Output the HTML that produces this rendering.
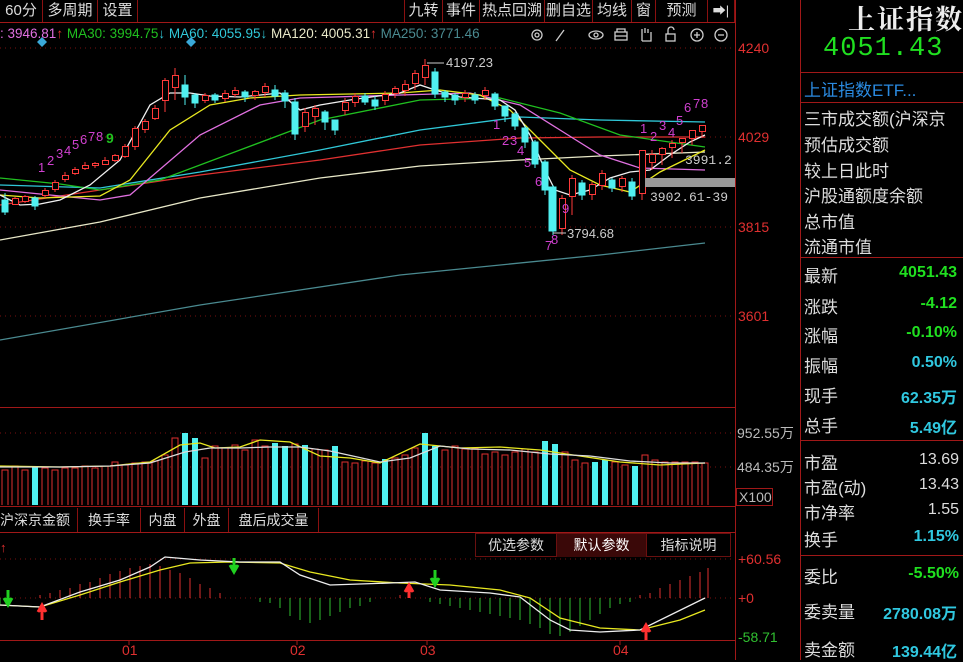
<!DOCTYPE html>
<html><head><meta charset="utf-8"><style>
*{margin:0;padding:0;box-sizing:border-box}
body{width:963px;height:660px;background:#000;overflow:hidden;position:relative;font-family:"Liberation Sans","Noto Sans CJK SC",sans-serif}
.t{position:absolute;white-space:nowrap}
.btn{position:absolute;top:0;height:22px;border-right:1px solid #8a1010;color:#ddd;font-size:15px;line-height:22px;text-align:center}
.rl{position:absolute;left:804px;color:#ddd;font-size:17px;white-space:nowrap}
.rv{position:absolute;right:2px;font-size:16px;font-weight:bold;white-space:nowrap}
</style></head><body>
<svg width="963" height="660" style="position:absolute;left:0;top:0" font-family="Liberation Sans,sans-serif">
<g stroke="#a01818" stroke-width="1" fill="none">
<line x1="0" y1="22.5" x2="735" y2="22.5"/>
<line x1="735.5" y1="0" x2="735.5" y2="660"/>
<line x1="800.5" y1="0" x2="800.5" y2="660"/>
<line x1="0" y1="407.5" x2="735" y2="407.5"/>
<line x1="0" y1="506.5" x2="735" y2="506.5"/>
<line x1="0" y1="532.5" x2="735" y2="532.5"/>
<line x1="0" y1="640.5" x2="735" y2="640.5"/>
<line x1="800" y1="72.5" x2="963" y2="72.5"/>
<line x1="800" y1="102.5" x2="963" y2="102.5"/>
<line x1="800" y1="257.5" x2="963" y2="257.5"/>
<line x1="800" y1="440.5" x2="963" y2="440.5"/>
<line x1="800" y1="555.5" x2="963" y2="555.5"/>
</g>
<g stroke="#7a1010" stroke-dasharray="1,4">
<line x1="0" y1="48" x2="735" y2="48"/><line x1="0" y1="137" x2="735" y2="137"/>
<line x1="0" y1="227" x2="735" y2="227"/><line x1="0" y1="316" x2="735" y2="316"/>
<line x1="0" y1="433" x2="735" y2="433"/><line x1="0" y1="467" x2="735" y2="467"/>
<line x1="0" y1="559" x2="735" y2="559"/><line x1="0" y1="598" x2="735" y2="598"/>
</g>
<g fill="#e03030" font-size="14">
<text x="738" y="53">4240</text><text x="738" y="142">4029</text>
<text x="738" y="232">3815</text><text x="738" y="321">3601</text>
</g>
<g fill="#bbb" font-size="14">
<text x="737" y="438">952.55万</text><text x="737" y="472">484.35万</text>
<text x="739" y="502">X100</text>
</g>
<rect x="736.5" y="488.5" width="36" height="17" fill="none" stroke="#a01818"/>
<g font-size="14"><text x="738" y="564" fill="#e03030">+60.56</text><text x="738" y="603" fill="#e03030">+0</text><text x="738" y="642" fill="#30c030">-58.71</text></g>
<g fill="#e03030" font-size="14"><text x="122" y="655">01</text><text x="290" y="655">02</text><text x="420" y="655">03</text><text x="613" y="655">04</text></g>
<g stroke="#a01818"><line x1="129" y1="640" x2="129" y2="645"/><line x1="297" y1="640" x2="297" y2="645"/><line x1="427" y1="640" x2="427" y2="645"/><line x1="620" y1="640" x2="620" y2="645"/></g>

<g fill="none" stroke-width="1.3">
<polyline stroke="#4a8a90" points="0,340 200,305 400,275 600,255 705,243"/>
<polyline stroke="#e8e8c8" points="0,240 100,222 200,198 320,178 420,166 520,160 600,156 705,152"/>
<polyline stroke="#e03030" points="0,205 100,190 200,175 320,160 420,145 520,138 600,137 705,137"/>
<polyline stroke="#30c8d8" points="0,185 100,188 200,172 320,150 420,130 520,117 600,120 705,122"/>
<polyline stroke="#20c020" points="0,178 60,184 100,190 160,180 240,150 320,120 420,100 500,98 560,113 620,135 705,147"/>
<polyline stroke="#e070e0" points="0,190 60,196 100,200 130,195 200,135 260,105 300,98 400,95 470,93 520,105 560,130 600,155 640,168 705,170"/>
<polyline stroke="#e8e820" points="0,195 40,198 100,196 130,180 170,130 210,105 250,98 300,95 400,93 440,90 480,95 510,110 540,140 570,170 600,185 630,192 660,172 705,150"/>
<polyline stroke="#f0f0f0" points="0,195 20,205 40,204 60,200 90,185 120,160 150,105 170,93 190,93 210,96 240,97 280,93 300,110 320,105 350,100 400,93 420,85 435,90 460,97 500,100 515,110 530,135 545,170 555,190 570,195 590,190 610,178 630,172 650,170 670,155 690,142 705,135"/>
</g>

<g stroke="#ff3a3a" fill="none">
<path d="M15 205v-8M25 203v-8M45 198v-10M55 192v-12M65 182v-10M75 175v-8M85 170v-8M95 168v-6M105 165v-8M115 162v-8M125 158v-14M135 150v-24M145 133v-14M155 120v-15M165 112v-34M175 100v-32M205 103v-10M225 102v-12M235 97v-10M255 100v-10M265 97v-14M305 132v-24M315 125v-20M345 115v-17M355 107v-14M385 105v-14M395 98v-12M405 96v-16M415 90v-20M425 85v-26M465 102v-12M485 100v-13M562 235v-40M572 215v-40M592 200v-18M602 190v-20M622 192v-16M642 200v-45M652 170v-20M662 165v-18M672 158v-18M682 153v-15M692 145v-15M702 138v-13"/>
</g>
<g fill="#000" stroke="#ff3a3a">
<rect x="12.5" y="198.5" width="6" height="6"/><rect x="22.5" y="196.5" width="6" height="5"/><rect x="42.5" y="190.5" width="6" height="5"/><rect x="52.5" y="182.5" width="6" height="7"/><rect x="62.5" y="175.5" width="6" height="4"/><rect x="72.5" y="169.5" width="6" height="4"/><rect x="82.5" y="165.5" width="6" height="3"/><rect x="92.5" y="163.5" width="6" height="2"/><rect x="102.5" y="160.5" width="6" height="4"/><rect x="112.5" y="155.5" width="6" height="5"/><rect x="122.5" y="146.5" width="6" height="10"/><rect x="132.5" y="128.5" width="6" height="18"/><rect x="142.5" y="121.5" width="6" height="8"/><rect x="152.5" y="108.5" width="6" height="10"/><rect x="162.5" y="80.5" width="6" height="20"/><rect x="172.5" y="75.5" width="6" height="12"/><rect x="202.5" y="95.5" width="6" height="5"/><rect x="222.5" y="93.5" width="6" height="5"/><rect x="232.5" y="90.5" width="6" height="4"/><rect x="252.5" y="91.5" width="6" height="4"/><rect x="262.5" y="86.5" width="6" height="6"/><rect x="302.5" y="112.5" width="6" height="14"/><rect x="312.5" y="108.5" width="6" height="8"/><rect x="342.5" y="102.5" width="6" height="8"/><rect x="352.5" y="96.5" width="6" height="6"/><rect x="382.5" y="94.5" width="6" height="6"/><rect x="392.5" y="88.5" width="6" height="5"/><rect x="402.5" y="84.5" width="6" height="6"/><rect x="412.5" y="73.5" width="6" height="10"/><rect x="422.5" y="65.5" width="6" height="12"/><rect x="462.5" y="93.5" width="6" height="4"/><rect x="482.5" y="90.5" width="6" height="5"/><rect x="559.5" y="198.5" width="6" height="30"/><rect x="569.5" y="178.5" width="6" height="18"/><rect x="589.5" y="184.5" width="6" height="10"/><rect x="599.5" y="173.5" width="6" height="12"/><rect x="619.5" y="178.5" width="6" height="8"/><rect x="639.5" y="150.5" width="6" height="43"/><rect x="649.5" y="154.5" width="6" height="8"/><rect x="659.5" y="148.5" width="6" height="6"/><rect x="669.5" y="143.5" width="6" height="4"/><rect x="679.5" y="138.5" width="6" height="4"/><rect x="689.5" y="130.5" width="6" height="8"/><rect x="699.5" y="125.5" width="6" height="6"/>
</g>
<g stroke="#50f0f0" fill="#50f0f0">
<path d="M5 215v-22M35 210v-14M185 105v-30M195 108v-15M215 103v-10M245 102v-12M275 100v-15M285 108v-18M295 140v-42M325 130v-20M335 135v-15M365 105v-12M375 110v-14M435 98v-30M445 102v-12M455 105v-12M475 104v-12M495 110v-18M505 122v-16M515 130v-18M525 148v-22M535 168v-28M545 195v-35M553 235v-50M582 200v-20M612 192v-14M632 200v-22"/>
<rect x="2" y="200" width="6" height="12"/><rect x="32" y="198" width="6" height="8"/><rect x="182" y="85" width="6" height="12"/><rect x="192" y="95" width="6" height="8"/><rect x="212" y="95" width="6" height="5"/><rect x="242" y="92" width="6" height="5"/><rect x="272" y="90" width="6" height="6"/><rect x="282" y="93" width="6" height="8"/><rect x="292" y="102" width="6" height="32"/><rect x="322" y="112" width="6" height="10"/><rect x="332" y="120" width="6" height="10"/><rect x="362" y="96" width="6" height="6"/><rect x="372" y="100" width="6" height="6"/><rect x="432" y="72" width="6" height="22"/><rect x="442" y="92" width="6" height="5"/><rect x="452" y="95" width="6" height="5"/><rect x="472" y="95" width="6" height="5"/><rect x="492" y="94" width="6" height="12"/><rect x="502" y="106" width="6" height="10"/><rect x="512" y="114" width="6" height="12"/><rect x="522" y="128" width="6" height="14"/><rect x="532" y="142" width="6" height="22"/><rect x="542" y="162" width="6" height="28"/><rect x="549" y="187" width="7" height="44"/><rect x="579" y="183" width="6" height="12"/><rect x="609" y="180" width="6" height="8"/><rect x="629" y="182" width="6" height="14"/>
</g>
<g fill="#ccc" font-size="13" font-family="Liberation Mono,monospace">
<line x1="427" y1="63" x2="444" y2="63" stroke="#ccc"/><text x="446" y="67" font-family="Liberation Sans">4197.23</text>
<line x1="553" y1="233" x2="566" y2="233" stroke="#ccc"/><text x="567" y="238" font-family="Liberation Sans">3794.68</text>
<text x="685" y="164">3991.2</text>
<rect x="645" y="178" width="90" height="9" fill="#999"/>
<text x="650" y="201">3902.61-39</text>
</g>
<g fill="#d040d0" font-size="13">
<text x="38" y="172">1</text><text x="47" y="165">2</text><text x="56" y="158">3</text><text x="64" y="155">4</text><text x="72" y="149">5</text><text x="80" y="144">6</text><text x="88" y="141">7</text><text x="96" y="141">8</text>
<text x="493" y="129">1</text><text x="502" y="145">2</text><text x="510" y="145">3</text><text x="517" y="155">4</text><text x="524" y="167">5</text><text x="535" y="186">6</text><text x="545" y="250">7</text><text x="551" y="244">8</text><text x="562" y="213">9</text>
<text x="640" y="133">1</text><text x="650" y="141">2</text><text x="659" y="130">3</text><text x="668" y="137">4</text><text x="676" y="125">5</text><text x="684" y="112">6</text><text x="693" y="108">7</text><text x="701" y="108">8</text>
</g>
<text x="106" y="143" fill="#20c020" font-size="14" font-weight="bold">9</text>
<path d="M42 47l-5-5 5-5 5 5z" fill="#3aa8d8"/><path d="M191 47l-5-5 5-5 5 5z" fill="#3aa8d8"/>

<g fill="#000" stroke="#e03030">
<path d="M2 505V470h6v35M12 505V466h6v39M22 505V470h6v35M42 505V468h6v37M52 505V470h6v35M62 505V468h6v37M72 505V468h6v37M82 505V466h6v39M92 505V468h6v37M102 505V466h6v39M112 505V462h6v43M122 505V465h6v40M132 505V463h6v42M142 505V462h6v43M152 505V461h6v44M162 505V455h6v50M172 505V438h6v67M202 505V458h6v47M212 505V446h6v59M222 505V448h6v57M232 505V445h6v60M242 505V450h6v55M252 505V440h6v65M262 505V446h6v59M292 505V444h6v61M312 505V449h6v56M322 505V450h6v55M342 505V462h6v43M352 505V463h6v42M362 505V461h6v44M372 505V463h6v42M392 505V458h6v47M402 505V455h6v50M412 505V448h6v57M442 505V450h6v55M452 505V446h6v59M462 505V449h6v56M472 505V448h6v57M482 505V454h6v51M492 505V452h6v53M502 505V455h6v50M512 505V452h6v53M522 505V449h6v56M532 505V452h6v53M562 505V452h6v53M572 505V460h6v45M582 505V463h6v42M612 505V462h6v43M622 505V465h6v40M642 505V455h6v50M652 505V460h6v45M662 505V462h6v43M672 505V462h6v43M682 505V462h6v43M692 505V462h6v43M702 505V463h6v42"/>
</g>
<g fill="#50f0f0">
<rect x="32" y="466" width="6" height="39"/><rect x="182" y="433" width="6" height="72"/><rect x="192" y="438" width="6" height="67"/><rect x="272" y="443" width="6" height="62"/><rect x="282" y="446" width="6" height="59"/><rect x="302" y="445" width="6" height="60"/><rect x="332" y="446" width="6" height="59"/><rect x="382" y="459" width="6" height="46"/><rect x="422" y="433" width="6" height="72"/><rect x="432" y="446" width="6" height="59"/><rect x="542" y="441" width="6" height="64"/><rect x="552" y="444" width="6" height="61"/><rect x="592" y="462" width="6" height="43"/><rect x="602" y="460" width="6" height="45"/><rect x="632" y="466" width="6" height="39"/>
</g>
<g fill="none" stroke-width="1.3">
<polyline stroke="#e8e820" points="0,466 60,467 110,466 150,462 180,445 200,443 215,448 240,447 260,440 290,442 320,456 350,458 380,463 420,444 440,446 460,448 500,447 540,450 580,456 620,462 660,465 705,463"/>
<polyline stroke="#ddd" points="0,467 60,467 110,466 150,463 185,452 210,448 240,448 270,447 300,447 330,451 380,462 410,458 440,446 470,449 510,450 550,454 590,456 630,461 670,463 705,463"/>
</g>

<g stroke="#e03030">
<path d="M40 598v-3M50 598v-5M60 598v-8M70 598v-10M80 598v-14M90 598v-16M100 598v-20M110 598v-24M120 598v-27M130 598v-30M140 598v-32M150 598v-34M160 598v-32M170 598v-28M180 598v-25M190 598v-20M200 598v-14M210 598v-10M220 598v-5M400 598v-3M410 598v-2M640 598v-3M650 598v-5M660 598v-10M670 598v-14M680 598v-18M690 598v-22M700 598v-26M708 598v-30"/>
</g>
<g stroke="#30c030">
<path d="M0 598v6M10 598v5M260 598v4M270 598v5M280 598v10M290 598v18M300 598v22M310 598v25M320 598v22M330 598v18M340 598v14M350 598v10M360 598v8M370 598v4M430 598v4M440 598v6M450 598v8M460 598v10M470 598v12M480 598v14M490 598v16M500 598v18M510 598v20M520 598v22M530 598v26M540 598v30M550 598v36M560 598v38M570 598v34M580 598v28M590 598v22M600 598v16M610 598v10M620 598v6M630 598v4"/>
</g>
<g fill="none" stroke-width="1.3">
<polyline stroke="#e8e820" points="0,605 40,607 80,595 120,582 160,570 190,563 230,562 280,563 310,572 350,580 400,583 450,585 500,590 530,598 560,618 600,628 640,630 680,620 705,610"/>
<polyline stroke="#eee" points="0,605 40,607 80,592 120,580 150,567 165,557 200,560 240,562 280,562 300,575 330,585 390,583 415,582 440,590 490,593 520,597 550,620 570,630 600,632 640,630 705,598"/>
</g>
<path d="M8 590v12M4 598l4 7 4-7" stroke="#20d020" stroke-width="3" fill="#20d020"/>
<path d="M42 620v-10M38 612l4-7 4 7" stroke="#ff3030" stroke-width="3" fill="#ff3030"/>
<path d="M234 558v12M230 565l4 7 4-7" stroke="#20d020" stroke-width="3" fill="#20d020"/>
<path d="M409 598v-8M405 592l4-7 4 7" stroke="#ff3030" stroke-width="3" fill="#ff3030"/>
<path d="M435 570v12M431 578l4 7 4-7" stroke="#20d020" stroke-width="3" fill="#20d020"/>
<path d="M646 640v-10M642 632l4-7 4 7" stroke="#ff3030" stroke-width="3" fill="#ff3030"/>
<text x="0" y="552" fill="#e03030" font-size="13">↑</text>

<g fill="none" stroke="#ccc" stroke-width="1.3">
<circle cx="537" cy="35" r="5"/><circle cx="537" cy="35" r="2"/>
<path d="M556 41l8-11"/>
<ellipse cx="596" cy="35" rx="7" ry="4"/><circle cx="596" cy="35" r="2"/>
<rect x="615" y="32" width="12" height="8"/><path d="M617 32v-3h8v3M615 36h12"/>
<path d="M642 41v-8M642 33v-4M645 33v-5M648 33v-4M651 35v-3M642 41h9v-6"/>
<rect x="666" y="34" width="9" height="7"/><path d="M668 34v-4a3 3 0 0 1 6 0"/>
<circle cx="697" cy="35" r="6"/><path d="M694 35h6M697 32v6"/>
<circle cx="721" cy="35" r="6"/><path d="M718 35h6"/>
</g>
</svg>

<div class="btn" style="left:0;width:43px">60分</div>
<div class="btn" style="left:43px;width:55px">多周期</div>
<div class="btn" style="left:98px;width:40px">设置</div>
<div class="btn" style="left:404px;width:39px;border-left:1px solid #8a1010">九转</div>
<div class="btn" style="left:443px;width:37px">事件</div>
<div class="btn" style="left:480px;width:65px">热点回溯</div>
<div class="btn" style="left:545px;width:48px">删自选</div>
<div class="btn" style="left:593px;width:39px">均线</div>
<div class="btn" style="left:632px;width:24px">窗</div>
<div class="btn" style="left:656px;width:52px">预测</div>
<div class="btn" style="left:708px;width:27px;font-size:13px">➡|</div>

<div class="t" style="left:0;top:26px;font-size:13.5px">
<span style="color:#e070e0">: 3946.81</span><span style="color:#e03030">↑</span>
<span style="color:#20c020">MA30: 3994.75</span><span style="color:#30c8d8">↓</span>
<span style="color:#30c8d8">MA60: 4055.95</span><span style="color:#30c8d8">↓</span>
<span style="color:#e8e8c8">MA120: 4005.31</span><span style="color:#e03030">↑</span>
<span style="color:#4a8a90">MA250: 3771.46</span></div>

<div class="t" style="left:0;top:508px;height:24px;font-size:14px;color:#ddd;line-height:24px">
<span style="display:inline-block;width:78px;border-right:1px solid #8a1010">沪深京金额</span><span style="display:inline-block;width:63px;border-right:1px solid #8a1010;text-align:center">换手率</span><span style="display:inline-block;width:44px;border-right:1px solid #8a1010;text-align:center">内盘</span><span style="display:inline-block;width:44px;border-right:1px solid #8a1010;text-align:center">外盘</span><span style="display:inline-block;width:90px;border-right:1px solid #8a1010;text-align:center">盘后成交量</span></div>
<div class="t" style="left:475px;top:533px;height:24px;font-size:14px;color:#ddd;line-height:23px;border:1px solid #6a1010">
<span style="display:inline-block;width:81px;text-align:center;border-right:1px solid #6a1010">优选参数</span><span style="display:inline-block;width:89px;text-align:center;background:#3a0808;color:#fff">默认参数</span><span style="display:inline-block;width:84px;text-align:center;border-left:1px solid #6a1010">指标说明</span></div>

<div class="t" style="left:848px;top:-2px;font-size:27px;color:#eee;font-family:'Noto Serif CJK SC',serif;font-weight:bold;letter-spacing:2px">上证指数</div>
<div class="t" style="left:823px;top:34px;font-size:27px;color:#20e020;font-family:'Liberation Mono',monospace;letter-spacing:1px">4051.43</div>
<div class="t" style="left:804px;top:76px;font-size:17px;color:#2a8ae0">上证指数ETF...</div>
<div class="rl" style="top:105px">三市成交额(沪深京</div>
<div class="rl" style="top:131px">预估成交额</div>
<div class="rl" style="top:157px">较上日此时</div>
<div class="rl" style="top:182px">沪股通额度余额</div>
<div class="rl" style="top:208px">总市值</div>
<div class="rl" style="top:233px">流通市值</div>
<div class="rl" style="top:262px">最新</div><div class="rv" style="top:264px;color:#20e020;right:6px">4051.43</div>
<div class="rl" style="top:293px">涨跌</div><div class="rv" style="top:295px;color:#20e020;right:6px">-4.12</div>
<div class="rl" style="top:322px">涨幅</div><div class="rv" style="top:324px;color:#20e020;right:6px">-0.10%</div>
<div class="rl" style="top:352px">振幅</div><div class="rv" style="top:354px;color:#30c8e0;right:6px">0.50%</div>
<div class="rl" style="top:382px">现手</div><div class="rv" style="top:384px;color:#30c8e0;right:6px">62.35万</div>
<div class="rl" style="top:412px">总手</div><div class="rv" style="top:414px;color:#30c8e0;right:6px">5.49亿</div>
<div class="rl" style="top:449px">市盈</div><div class="rv" style="top:451px;color:#ddd;font-weight:normal;right:4px">13.69</div>
<div class="rl" style="top:474px">市盈(动)</div><div class="rv" style="top:476px;color:#ddd;font-weight:normal;right:4px">13.43</div>
<div class="rl" style="top:499px">市净率</div><div class="rv" style="top:501px;color:#ddd;font-weight:normal;right:4px">1.55</div>
<div class="rl" style="top:526px">换手</div><div class="rv" style="top:528px;color:#30c8e0;right:4px">1.15%</div>
<div class="rl" style="top:563px">委比</div><div class="rv" style="top:565px;color:#20e020;right:4px">-5.50%</div>
<div class="rl" style="top:598px">委卖量</div><div class="rv" style="top:600px;color:#30c8e0;right:6px">2780.08万</div>
<div class="rl" style="top:636px">卖金额</div><div class="rv" style="top:638px;color:#30c8e0;right:6px">139.44亿</div>
</body></html>
